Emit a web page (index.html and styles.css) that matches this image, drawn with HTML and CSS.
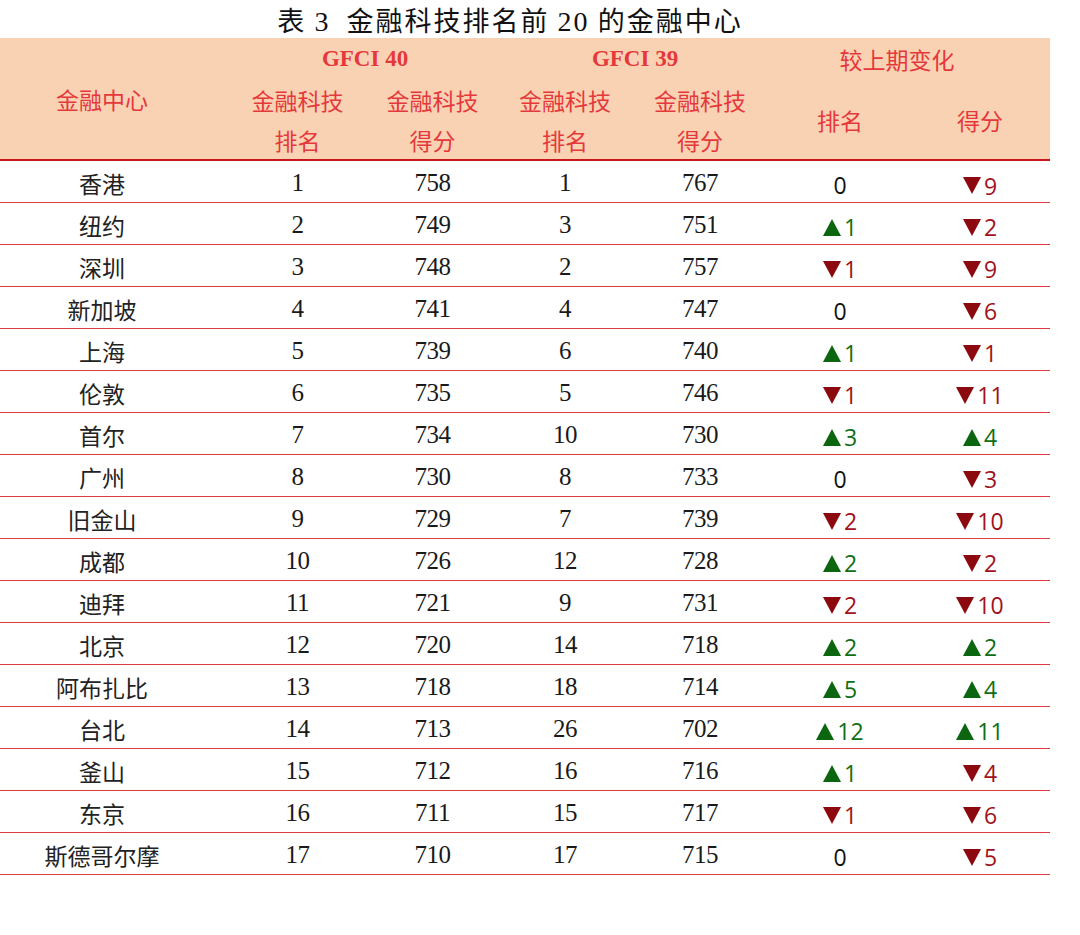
FILE: index.html
```html
<!DOCTYPE html>
<html lang="zh">
<head>
<meta charset="utf-8">
<title>表 3 金融科技排名前 20 的金融中心</title>
<link rel="stylesheet" href="styles.css">
</head>
<body>
<div class="page">
  <h1 class="title">表 <span class="num">3</span>&nbsp; 金融科技排名前 <span class="num">20</span> 的金融中心</h1>
  <table class="rank">
    <colgroup>
      <col class="c-name"><col class="c-a"><col class="c-a"><col class="c-b"><col class="c-c"><col class="c-c"><col class="c-c">
    </colgroup>
    <thead>
      <tr class="h1">
        <th rowspan="3" class="name">金融中心</th>
        <th colspan="2" class="gfci">GFCI 40</th>
        <th colspan="2" class="gfci">GFCI 39</th>
        <th colspan="2" class="chg-h">较上期变化</th>
      </tr>
      <tr class="h2">
        <th>金融科技</th><th>金融科技</th><th>金融科技</th><th>金融科技</th>
        <th rowspan="2">排名</th><th rowspan="2">得分</th>
      </tr>
      <tr class="h3">
        <th>排名</th><th>得分</th><th>排名</th><th>得分</th>
      </tr>
    </thead>
    <tbody>
      <tr><td class="name">香港</td><td>1</td><td>758</td><td>1</td><td>767</td><td class="chg"><span class="z">0</span></td><td class="chg"><span class="dn">9</span></td></tr>
      <tr><td class="name">纽约</td><td>2</td><td>749</td><td>3</td><td>751</td><td class="chg"><span class="up">1</span></td><td class="chg"><span class="dn">2</span></td></tr>
      <tr><td class="name">深圳</td><td>3</td><td>748</td><td>2</td><td>757</td><td class="chg"><span class="dn">1</span></td><td class="chg"><span class="dn">9</span></td></tr>
      <tr><td class="name">新加坡</td><td>4</td><td>741</td><td>4</td><td>747</td><td class="chg"><span class="z">0</span></td><td class="chg"><span class="dn">6</span></td></tr>
      <tr><td class="name">上海</td><td>5</td><td>739</td><td>6</td><td>740</td><td class="chg"><span class="up">1</span></td><td class="chg"><span class="dn">1</span></td></tr>
      <tr><td class="name">伦敦</td><td>6</td><td>735</td><td>5</td><td>746</td><td class="chg"><span class="dn">1</span></td><td class="chg"><span class="dn">11</span></td></tr>
      <tr><td class="name">首尔</td><td>7</td><td>734</td><td>10</td><td>730</td><td class="chg"><span class="up">3</span></td><td class="chg"><span class="up">4</span></td></tr>
      <tr><td class="name">广州</td><td>8</td><td>730</td><td>8</td><td>733</td><td class="chg"><span class="z">0</span></td><td class="chg"><span class="dn">3</span></td></tr>
      <tr><td class="name">旧金山</td><td>9</td><td>729</td><td>7</td><td>739</td><td class="chg"><span class="dn">2</span></td><td class="chg"><span class="dn">10</span></td></tr>
      <tr><td class="name">成都</td><td>10</td><td>726</td><td>12</td><td>728</td><td class="chg"><span class="up">2</span></td><td class="chg"><span class="dn">2</span></td></tr>
      <tr><td class="name">迪拜</td><td>11</td><td>721</td><td>9</td><td>731</td><td class="chg"><span class="dn">2</span></td><td class="chg"><span class="dn">10</span></td></tr>
      <tr><td class="name">北京</td><td>12</td><td>720</td><td>14</td><td>718</td><td class="chg"><span class="up">2</span></td><td class="chg"><span class="up">2</span></td></tr>
      <tr><td class="name">阿布扎比</td><td>13</td><td>718</td><td>18</td><td>714</td><td class="chg"><span class="up">5</span></td><td class="chg"><span class="up">4</span></td></tr>
      <tr><td class="name">台北</td><td>14</td><td>713</td><td>26</td><td>702</td><td class="chg"><span class="up">12</span></td><td class="chg"><span class="up">11</span></td></tr>
      <tr><td class="name">釜山</td><td>15</td><td>712</td><td>16</td><td>716</td><td class="chg"><span class="up">1</span></td><td class="chg"><span class="dn">4</span></td></tr>
      <tr><td class="name">东京</td><td>16</td><td>711</td><td>15</td><td>717</td><td class="chg"><span class="dn">1</span></td><td class="chg"><span class="dn">6</span></td></tr>
      <tr><td class="name">斯德哥尔摩</td><td>17</td><td>710</td><td>17</td><td>715</td><td class="chg"><span class="z">0</span></td><td class="chg"><span class="dn">5</span></td></tr>
    </tbody>
  </table>
</div>
</body>
</html>
```
FILE: styles.css
```css
html, body {
  margin: 0;
  padding: 0;
  background: #ffffff;
}

.page {
  width: 1080px;
  height: 935px;
}

.title {
  width: 1050px;
  box-sizing: border-box;
  margin: 0;
  padding: 3px 30px 0 0;
  height: 38px;
  line-height: 34px;
  text-align: center;
  font-family: "Noto Sans CJK SC", "Liberation Serif", serif;
  font-weight: 400;
  font-size: 27px;
  letter-spacing: 2px;
  color: #111;
}

.title .num {
  font-family: "Liberation Serif", serif;
  font-size: 28px;
}

.rank {
  width: 1050px;
  border-collapse: collapse;
  table-layout: fixed;
}

.c-name { width: 230px; }
.c-a { width: 135px; }
.c-b { width: 130px; }
.c-c { width: 140px; }

.rank thead {
  background: #f9d2b4;
}

.rank th {
  padding: 0;
  font-weight: 400;
  color: #e5383b;
  font-family: "Noto Sans CJK SC", sans-serif;
  font-size: 23px;
  text-align: center;
  vertical-align: middle;
}

.rank th.name {
  padding-right: 26px;
}

.rank tr.h1 { height: 42px; }
.rank tr.h2 { height: 40px; }
.rank tr.h3 { height: 40px; }

.rank th.gfci {
  font-family: "Liberation Serif", serif;
  font-weight: 700;
  font-size: 23px;
}

.rank th.chg-h {
  padding-right: 26px;
}

.rank tbody tr:first-child td {
  border-top: 2px solid #c8161d;
}

.rank tbody tr {
  height: 42px;
}

.rank td {
  padding: 3px 0 0;
  border-bottom: 1px solid #de3a40;
  text-align: center;
  vertical-align: middle;
  font-family: "Liberation Serif", serif;
  font-size: 25px;
  color: #1a1a1a;
  letter-spacing: -0.5px;
}

.rank td.name {
  padding: 3px 26px 0 0;
  font-family: "Noto Sans CJK SC", sans-serif;
  font-size: 23px;
  letter-spacing: 0;
  color: #222;
}

.rank td.chg {
  font-family: "Open Sans", "Noto Sans", sans-serif;
  font-size: 23px;
  letter-spacing: 0;
  padding-top: 8px;
}

.chg span {
  display: inline-flex;
  align-items: center;
  gap: 3px;
}

.chg .z { color: #111; }
.chg .dn { color: #a1121a; }
.chg .up { color: #0f6e14; }

.chg .dn::before,
.chg .up::before {
  content: "";
  display: inline-block;
  width: 0;
  height: 0;
  border-left: 9px solid transparent;
  border-right: 9px solid transparent;
}

.chg .dn::before {
  border-top: 17px solid #8c0a0f;
}

.chg .up::before {
  border-bottom: 17px solid #0b660f;
}
```
